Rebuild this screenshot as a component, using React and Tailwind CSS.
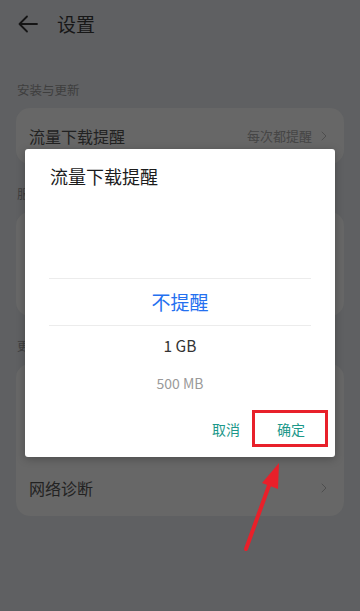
import { ChevronRight } from 'lucide-react';

const font = { fontFamily: '"Noto Sans CJK SC", "Noto Sans", sans-serif' };

function Row({ label, value }) {
  return (
    <div className="h-12 flex items-center justify-between pl-[13px] pr-[12px]">
      <span className="text-[16px] text-[#222]">{label}</span>
      <div className="flex items-center gap-1">
        {value && <span className="text-[13px] text-[#454545]">{value}</span>}
        <ChevronRight size={16} strokeWidth={1.5} className="text-[#4e4e4e]" />
      </div>
    </div>
  );
}

function Section({ title, children }) {
  return (
    <div className="mt-[20px] first:mt-0">
      <div className="px-[17px] h-5 leading-5 text-[12.5px] text-[#3e3e3e]">{title}</div>
      <div className="mx-4 mt-2 rounded-[14px] bg-[#676767] py-1">{children}</div>
    </div>
  );
}

function Dialog() {
  return (
    <div className="absolute left-[25px] top-[149px] w-[310px] h-[308px] bg-white rounded-[3px] shadow-[0_2px_8px_rgba(0,0,0,0.25)] flex flex-col">
      <div className="pl-[25px] pt-[14px] h-[42px] leading-[26px] text-[18px] text-[#1c1c1c]">流量下载提醒</div>
      <div className="h-[87px]" />
      <div className="mx-6 border-t-[1.5px] border-b-[1.5px] border-[#ececec] h-[48px] flex items-center justify-center text-[19px] text-[#2470f0]">
        不提醒
      </div>
      <div className="h-[40px] flex items-center justify-center text-[15.5px] text-[#333]">1 GB</div>
      <div className="h-[34px] flex items-center justify-center text-[14px] text-[#9a9a9a]">500 MB</div>
      <div className="flex justify-end items-center pr-[30px] pt-[19px] gap-[37px]">
        <span className="text-[14px] text-[#1c988a]">取消</span>
        <span className="text-[14px] text-[#1c988a]">确定</span>
      </div>
    </div>
  );
}

export default function App() {
  return (
    <div className="relative w-[360px] h-[611px] overflow-hidden bg-[#5f6062]" style={font}>
      <div className="flex items-center h-[48px] pl-[16px]">
        <svg width="24" height="24" viewBox="0 0 24 24" fill="none" stroke="#151515" strokeWidth="1.8" strokeLinecap="round" strokeLinejoin="round">
          <path d="M21 12H4" />
          <path d="M11 4.5L3.5 12L11 19.5" />
        </svg>
        <span className="ml-[17px] text-[19px] text-[#171717]">设置</span>
      </div>

      <div className="pt-[32px]">
        <Section title="安装与更新">
          <Row label="流量下载提醒" value="每次都提醒" />
        </Section>
        <Section title="服务与隐私">
          <Row label="用户协议" />
          <Row label="隐私声明" />
        </Section>
        <Section title="更多">
          <Row label="检查更新" />
          <Row label="关于" />
          <Row label="网络诊断" />
        </Section>
      </div>

      <Dialog />

      <div className="absolute left-[252px] top-[410px] w-[76px] h-[37px] border-[3px] border-[#e8202a]" />

      <svg className="absolute left-0 top-0" width="360" height="611" viewBox="0 0 360 611">
        <line x1="246" y1="549" x2="271" y2="480" stroke="#e8202a" strokeWidth="4" strokeLinecap="round" />
        <polygon points="279,463 262,483 278,489" fill="#e8202a" />
      </svg>
    </div>
  );
}
